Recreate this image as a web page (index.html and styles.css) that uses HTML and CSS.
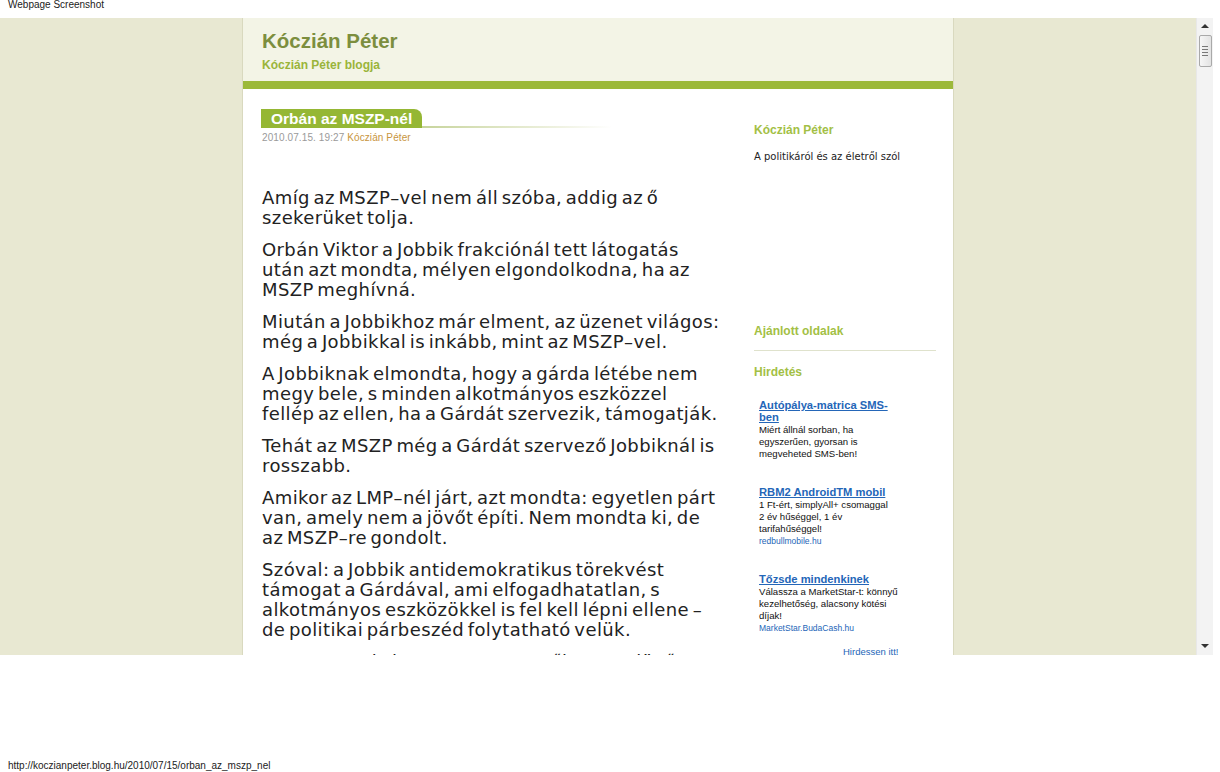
FILE: index.html
```html
<!DOCTYPE html>
<html lang="hu">
<head>
<meta charset="utf-8">
<title>Orbán az MSZP-nél</title>
<link rel="stylesheet" href="styles.css">
</head>
<body>
<div class="caption">Webpage Screenshot</div>
<div class="viewport">
  <div class="page">
    <div class="container">
      <div class="header">
        <div class="site-title">Kóczián Péter</div>
        <div class="site-sub">Kóczián Péter blogja</div>
      </div>
      <div class="greenbar"></div>
      <div class="columns">
        <div class="main">
          <div class="post-head">
            <h1 class="post-title">Orbán az MSZP-nél</h1>
            <div class="post-line"></div>
          </div>
          <div class="meta">2010.07.15. 19:27 <span class="author">Kóczián Péter</span></div>
          <div class="post-body">
            <p>Amíg az MSZP–vel nem áll szóba, addig az ő szekerüket tolja.</p>
            <p>Orbán Viktor a Jobbik frakciónál tett látogatás után azt mondta, mélyen elgondolkodna, ha az MSZP meghívná.</p>
            <p>Miután a Jobbikhoz már elment, az üzenet világos: még a Jobbikkal is inkább, mint az MSZP–vel.</p>
            <p>A Jobbiknak elmondta, hogy a gárda létébe nem megy bele, s minden alkotmányos eszközzel fellép az ellen, ha a Gárdát szervezik, támogatják.</p>
            <p>Tehát az MSZP még a Gárdát szervező Jobbiknál is rosszabb.</p>
            <p>Amikor az LMP–nél járt, azt mondta: egyetlen párt van, amely nem a jövőt építi. Nem mondta ki, de az MSZP–re gondolt.</p>
            <p>Szóval: a Jobbik antidemokratikus törekvést támogat a Gárdával, ami elfogadhatatlan, s alkotmányos eszközökkel is fel kell lépni ellene – de politikai párbeszéd folytatható velük.</p>
            <p>Az MSZP–vel viszont nem, mert ők nem a jövőt építik, hanem a múltat.</p>
          </div>
        </div>
        <div class="sidebar">
          <h3 class="side-title">Kóczián Péter</h3>
          <p class="side-desc">A politikáról és az életről szól</p>
          <h3 class="side-title rec">Ajánlott oldalak</h3>
          <div class="side-rule"></div>
          <h3 class="side-title ads-title">Hirdetés</h3>
          <div class="ads">
            <div class="ad">
              <a class="ad-title" href="#">Autópálya-matrica SMS-ben</a>
              <div class="ad-text">Miért állnál sorban, ha egyszerűen, gyorsan is megveheted SMS-ben!</div>
            </div>
            <div class="ad">
              <a class="ad-title" href="#">RBM2 AndroidTM mobil</a>
              <div class="ad-text">1 Ft-ért, simplyAll+ csomaggal<br>2 év hűséggel, 1 év tarifahűséggel!</div>
              <div class="ad-url">redbullmobile.hu</div>
            </div>
            <div class="ad">
              <a class="ad-title" href="#">Tőzsde mindenkinek</a>
              <div class="ad-text">Válassza a MarketStar-t: könnyű kezelhetőség, alacsony kötési díjak!</div>
              <div class="ad-url">MarketStar.BudaCash.hu</div>
            </div>
            <div class="ad-more">Hirdessen itt!</div>
          </div>
        </div>
      </div>
    </div>
  </div>
  <div class="scrollbar">
    <div class="sb-up"></div>
    <div class="sb-thumb"><span></span><span></span><span></span><span></span></div>
    <div class="sb-track"></div>
    <div class="sb-down"></div>
  </div>
</div>
<div class="status">http://koczianpeter.blog.hu/2010/07/15/orban_az_mszp_nel</div>
</body>
</html>
```
FILE: styles.css
```css
* { box-sizing: border-box; }
html, body { margin: 0; padding: 0; background: #fff; }
body { font-family: "Liberation Sans", Arial, sans-serif; width: 1220px; height: 772px; overflow: hidden; }

.caption { height: 18px; padding: 0 0 0 8px; font-size: 10px; line-height: 9px; color: #222; }

.viewport { display: flex; width: 1213px; height: 637px; overflow: hidden; background: #e8e8d2; }
.page { width: 1196px; height: 637px; overflow: hidden; }
.container { margin-left: 242px; width: 712px; min-height: 637px; background: #fff; border-left: 1px solid #d9d9bf; border-right: 1px solid #d9d9bf; }

.header { height: 63px; background: #f3f4e6; padding: 11px 0 0 19px; }
.site-title { font-size: 20.5px; font-weight: bold; color: #7c8e3e; line-height: 24px; }
.site-sub { margin-top: 5px; font-size: 12px; font-weight: bold; color: #9ab43a; line-height: 14px; }
.greenbar { height: 8px; background: #9cb93a; }

.columns { display: flex; }
.main { width: 511px; padding: 20px 0 0 18px; }
.post-head { display: flex; align-items: flex-end; }
.post-title { margin: 0; height: 19px; padding: 0 10px 0 10px; background: #95b734; color: #fff; font-size: 15.5px; line-height: 19px; font-weight: bold; border-top-right-radius: 8px; white-space: nowrap; }
.post-line { width: 190px; height: 2px; background: linear-gradient(to right, #c7d49c, #eef1df 70%, #fff); }
.meta { margin: 4px 0 0 1px; font-size: 10px; letter-spacing: 0.1px; color: #9a9a9a; line-height: 12px; }
.author { color: #c8953e; }

.post-body { margin: 44px 0 0 1px; width: 458.6px; font-family: "DejaVu Sans", "Lucida Grande", sans-serif; font-size: 18px; line-height: 20px; letter-spacing: 0.4px; word-spacing: -2.5px; color: #222; }
.post-body p { margin: 0 0 12px; }

.sidebar { width: 182px; padding-top: 34px; }
.side-title { margin: 0; font-size: 12px; font-weight: bold; color: #a3bf45; line-height: 14px; }
.side-desc { margin: 13px 0 0; font-family: "DejaVu Sans", Verdana, sans-serif; font-size: 10px; line-height: 13px; color: #222; }
.rec { margin-top: 161px; }
.side-rule { height: 1px; background: #dfe2cc; margin-top: 12px; }
.ads-title { margin-top: 14px; }
.ads { padding: 20px 0 0 5px; }
.ad { width: 140px; margin-bottom: 26px; }
.ad-title { display: block; font-size: 11.2px; font-weight: bold; color: #2466b8; text-decoration: underline; line-height: 12px; }
.ad-text { margin-top: 1px; font-size: 9.6px; line-height: 12px; color: #111; }
.ad-url { font-size: 8.5px; line-height: 12px; color: #2466b8; }
.ad-more { margin-top: -14px; padding-left: 84px; font-size: 9.5px; line-height: 12px; color: #2466b8; }

.scrollbar { width: 17px; height: 637px; background: #f3f3f3; display: flex; flex-direction: column; align-items: center; border-left: 1px solid #e8e8e8; }
.sb-up { height: 17px; width: 100%; position: relative; }
.sb-up::after { content: ""; position: absolute; left: 4px; top: 6px; border: 4px solid transparent; border-bottom: 4px solid #333; border-top: 0; }
.sb-thumb { width: 13px; height: 32px; border: 1px solid #a9a9a9; border-radius: 2px; background: linear-gradient(to right, #f6f6f6, #e3e3e3); display: flex; flex-direction: column; justify-content: center; align-items: center; gap: 2px; }
.sb-thumb span { display: block; width: 6px; height: 1px; background: #777; }
.sb-track { flex: 1; }
.sb-down { height: 17px; width: 100%; position: relative; }
.sb-down::after { content: ""; position: absolute; left: 4px; top: 6px; border: 4px solid transparent; border-top: 4px solid #333; border-bottom: 0; }

.status { margin-top: 106px; padding-left: 8px; font-size: 10px; line-height: 10px; color: #222; }
```
